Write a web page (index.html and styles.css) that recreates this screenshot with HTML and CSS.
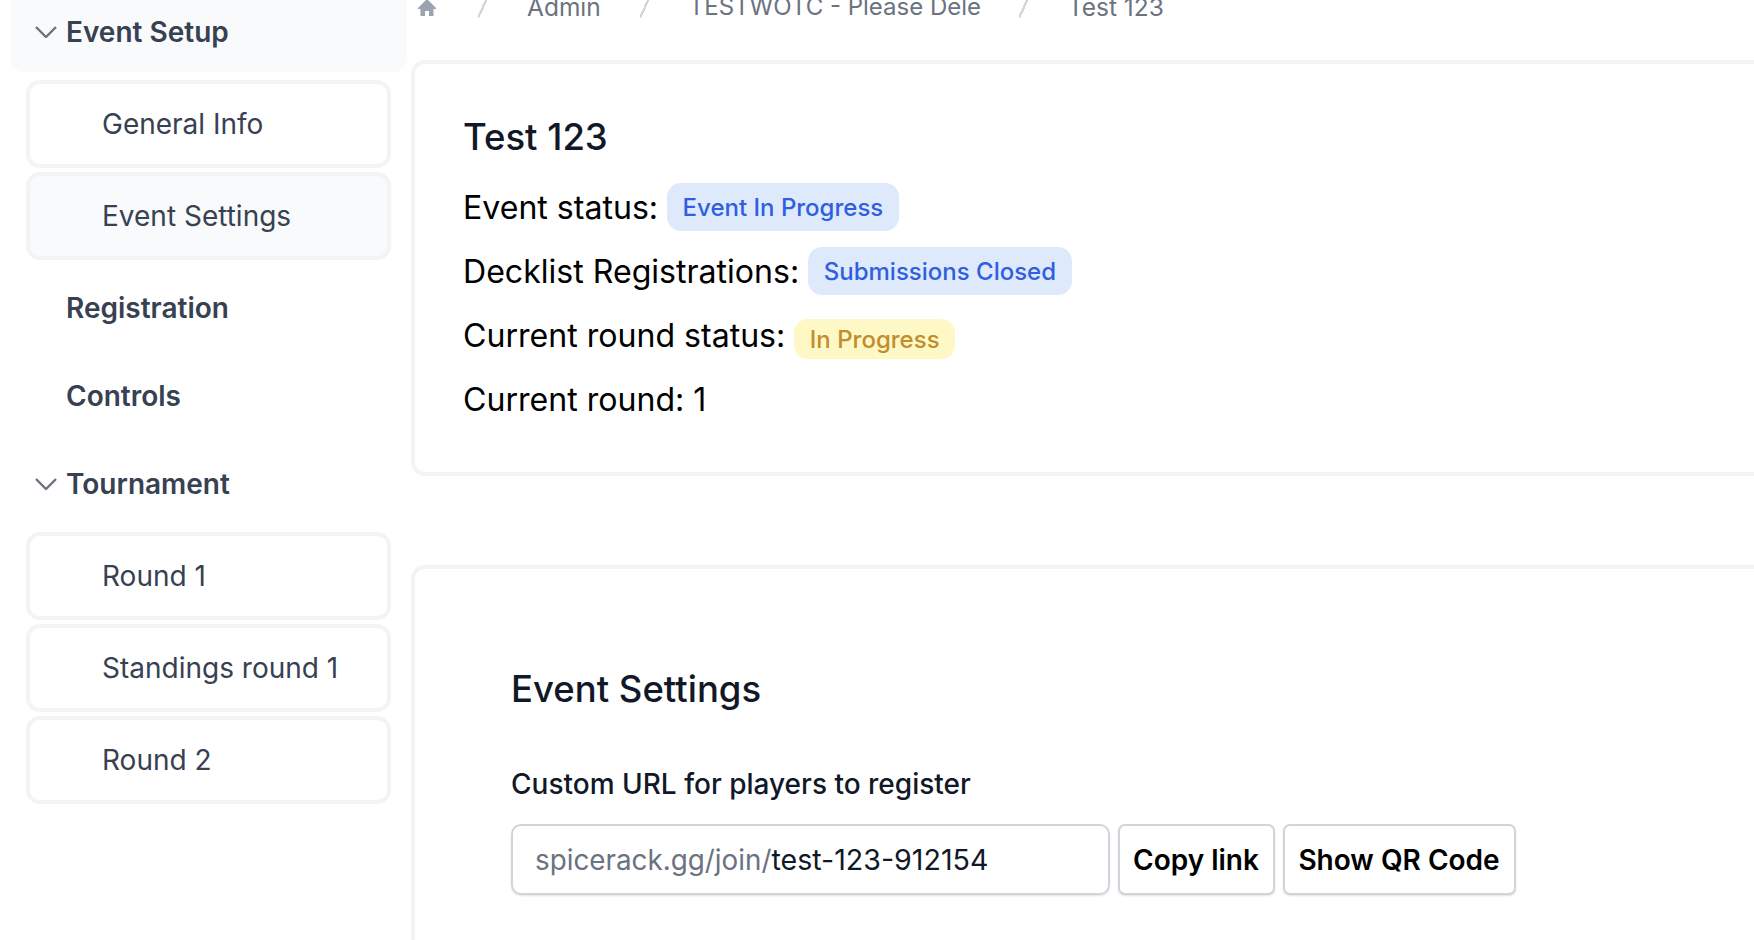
FILE: index.html
```html
<!doctype html>
<html lang="en">

<head>
    <title>Test 123</title>
    <meta charset="utf-8">
    <link rel="stylesheet" href="styles.css">
</head>

<body>
    <div class="page">
        <nav class="sidebar">
            <div class="groupRow active">
                <svg class="chevron" viewBox="0 0 22 12"><path d="M1 1 L11 11 L21 1"/></svg>
                <span>Event Setup</span>
            </div>
            <div class="subList first">
                <a class="subItem">General Info</a>
                <a class="subItem current">Event Settings</a>
            </div>
            <div class="groupRow"><span>Registration</span></div>
            <div class="groupRow"><span>Controls</span></div>
            <div class="groupRow">
                <svg class="chevron" viewBox="0 0 22 12"><path d="M1 1 L11 11 L21 1"/></svg>
                <span>Tournament</span>
            </div>
            <div class="subList">
                <a class="subItem">Round 1</a>
                <a class="subItem">Standings round 1</a>
                <a class="subItem">Round 2</a>
            </div>
        </nav>

        <main class="content">
            <div class="crumbs">
                <svg class="home" viewBox="0 0 20 20"><path d="M10 1 L1 10 L1 11 L3.5 11 L3.5 18 L8 18 L8 13 L12 13 L12 18 L16.5 18 L16.5 11 L19 11 L19 10 Z"/></svg>
                <span class="slash"></span>
                <span class="crumb">Admin</span>
                <span class="slash"></span>
                <span class="crumb cut">TESTWOTC - Please Delete</span>
                <span class="slash"></span>
                <span class="crumb">Test 123</span>
            </div>

            <section class="card summary">
                <h2 class="title">Test 123</h2>
                <p class="line">Event status: <span class="badge blue">Event In Progress</span></p>
                <p class="line">Decklist Registrations: <span class="badge blue">Submissions Closed</span></p>
                <p class="line">Current round status: <span class="badge yellow">In Progress</span></p>
                <p class="line">Current round: 1</p>
            </section>

            <section class="card settings">
                <h2 class="title">Event Settings</h2>
                <label class="fieldLabel">Custom URL for players to register</label>
                <div class="urlRow">
                    <div class="urlInput"><span class="prefix">spicerack.gg/join/</span>test-123-912154</div>
                    <button>Copy link</button>
                    <button>Show QR Code</button>
                </div>
            </section>
        </main>
    </div>
</body>

</html>
```

FILE: styles.css
```css
html, body {
    height: 100%;
    margin: 0;
    overflow: hidden;
}

body {
    background: white;
    font-family: Inter, 'Noto Sans', sans-serif;
    color: #111827;
}

.page {
    display: flex;
    margin-top: -16px;
}

.sidebar {
    width: 397px;
    margin-left: 10px;
    margin-right: 5px;
    flex-shrink: 0;
}

.groupRow {
    height: 88px;
    display: flex;
    align-items: center;
    padding-left: 56px;
    position: relative;
    font-size: 28px;
    font-weight: 600;
    color: #374151;
    border-radius: 14px;
}

.groupRow.active {
    background-color: #f9fafb;
    padding-top: 8px;
    box-sizing: border-box;
}

.chevron {
    position: absolute;
    left: 25px;
    width: 22px;
    height: 12px;
    fill: none;
    stroke: #6b7280;
    stroke-width: 2.4;
}

.subList {
    display: flex;
    flex-direction: column;
    gap: 4px;
    margin: 4px 16px 4px 16px;
}

.subList.first {
    margin-top: 8px;
}

.subItem {
    height: 88px;
    box-sizing: border-box;
    display: flex;
    align-items: center;
    padding-left: 72px;
    border: 4px solid #f3f4f6;
    border-radius: 14px;
    font-size: 28px;
    color: #374151;
}

.subItem.current {
    background-color: #f9fafb;
}

.content {
    flex: 1;
    min-width: 0;
    margin-left: -1px;
}

.crumbs {
    height: 76px;
    display: flex;
    align-items: flex-start;
    font-size: 24.5px;
    color: #6b7280;
    line-height: 30px;
    padding-top: 8px;
    padding-left: 6px;
    box-sizing: border-box;
}

.home {
    width: 20px;
    height: 20px;
    margin-top: 6px;
    margin-right: 2px;
    fill: #9ca3af;
}

.crumb {
    white-space: nowrap;
}

.crumb.cut {
    width: 292px;
    overflow: hidden;
    font-size: 24px;
}

.slash {
    width: 10px;
    height: 22px;
    margin: 4px 39px 0 39px;
    background: linear-gradient(to bottom right, transparent 44%, #d1d5db 44%, #d1d5db 56%, transparent 56%);
}

.crumb.cut + .slash {
    margin-left: 38px;
}

.card {
    border: 4px solid #f3f4f6;
    border-right: none;
    border-radius: 14px 0 0 14px;
    box-sizing: border-box;
}

.summary {
    height: 416px;
    padding: 51px 0 0 48px;
}

.settings {
    margin-top: 89px;
    height: 375px;
    padding: 98px 0 0 96px;
    border-bottom: none;
    border-radius: 14px 0 0 0;
}

.title {
    margin: 0;
    font-size: 36.5px;
    font-weight: 500;
    line-height: 44px;
    color: #111827;
}

.line {
    margin: 0;
    height: 64px;
    display: flex;
    align-items: center;
    font-size: 32.1px;
    color: black;
    white-space: pre;
}

.summary .title {
    margin-bottom: 16px;
}

.badge {
    font-size: 24px;
    font-weight: 500;
    padding: 0 15.5px;
    height: 48px;
    display: flex;
    align-items: center;
    border-radius: 14px;
}

.badge.blue {
    background-color: #dee9fc;
    color: #2f5fe0;
}

.badge.yellow {
    background-color: #fef8c6;
    color: #c28d2c;
    height: 40px;
    margin-top: 8px;
}

.fieldLabel {
    display: block;
    margin-top: 53px;
    font-size: 28px;
    font-weight: 500;
    line-height: 40px;
    color: #111827;
}

.urlRow {
    display: flex;
    gap: 8px;
    margin-top: 20px;
}

.urlInput {
    width: 599px;
    height: 71px;
    box-sizing: border-box;
    display: flex;
    align-items: center;
    padding-left: 22px;
    border: 2px solid #d1d5db;
    border-radius: 10px;
    box-shadow: 0 1px 2px rgba(0, 0, 0, 0.12);
    font-size: 28.6px;
    color: #111827;
}

.prefix {
    color: #6b7280;
    font-size: 27.8px;
}

button {
    height: 71px;
    padding: 0 14.5px 0 13px;
    background: white;
    border: 2px solid #d1d5db;
    border-radius: 7px;
    box-shadow: 0 1px 2px rgba(0, 0, 0, 0.12);
    font-family: inherit;
    font-size: 28px;
    font-weight: 600;
    color: black;
}
```
